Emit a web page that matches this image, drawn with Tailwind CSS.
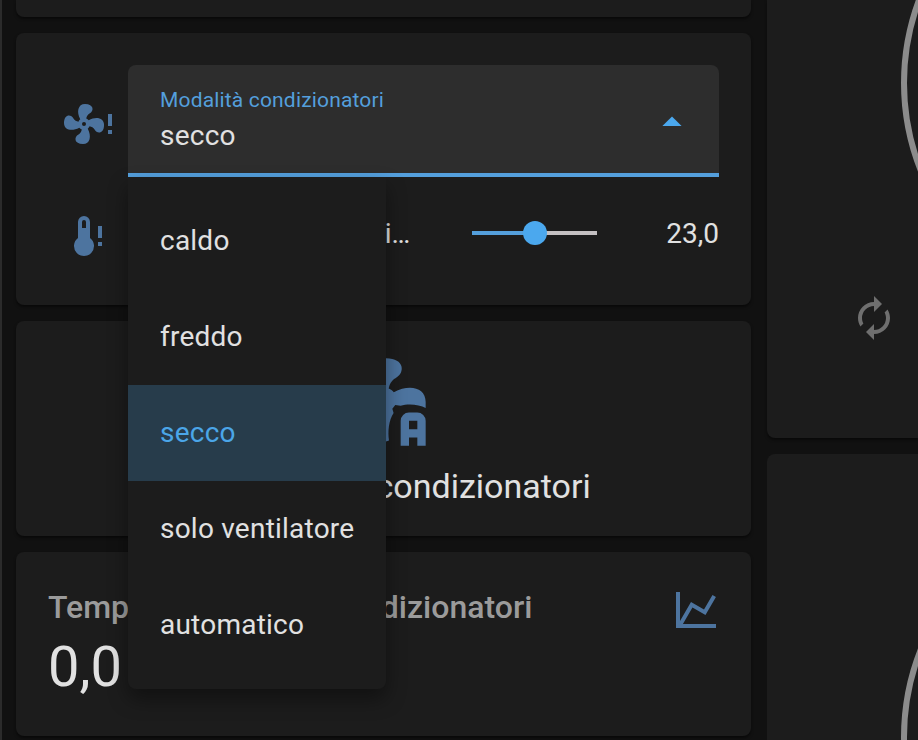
<!DOCTYPE html>
<html lang="it">
<head>
<meta charset="utf-8">
<meta name="viewport" content="width=device-width, initial-scale=1">
<title>Condizionatori</title>
<script src="https://cdn.jsdelivr.net/npm/@tailwindcss/browser@4"></script>
</head>
<body class="bg-[#111111] text-[#e1e1e1] font-[Roboto,sans-serif] text-[28px] leading-8">
<main class="grid h-screen grid-cols-[minmax(0,1fr)_151px] gap-4 overflow-hidden border-l-2 border-[#2b2b2b] pl-3.5">
  <div class="flex flex-col gap-4">
    <section class="h-[17px] shrink-0 rounded-b-lg bg-[#1c1c1c] shadow-[0_2px_3px_rgba(0,0,0,0.5)]"></section>

    <section class="flex flex-col gap-4 rounded-lg bg-[#1c1c1c] p-8 shadow-[0_2px_3px_rgba(0,0,0,0.5)]">
      <div class="flex items-center">
        <div class="w-20 shrink-0 px-4 pt-1.5">
          <svg class="size-12 fill-[#4d749f]" viewBox="0 0 24 24" aria-hidden="true">
            <path transform="translate(-2 0)" d="M12,11A1,1 0 0,0 11,12A1,1 0 0,0 12,13A1,1 0 0,0 13,12A1,1 0 0,0 12,11M12.5,2C17,2 17.11,5.57 14.75,6.75C13.76,7.24 13.32,8.29 13.13,9.22C13.61,9.42 14.03,9.73 14.35,10.13C18.05,8.13 22.03,8.92 22.03,12.5C22.03,17 18.46,17.1 17.28,14.73C16.78,13.74 15.72,13.3 14.79,13.11C14.59,13.59 14.28,14 13.88,14.34C15.87,18.03 15.08,22 11.5,22C7,22 6.91,18.42 9.27,17.24C10.25,16.75 10.69,15.71 10.89,14.79C10.4,14.59 9.97,14.27 9.65,13.87C5.96,15.85 2,15.07 2,11.5C2,7 5.56,6.89 6.74,9.26C7.24,10.25 8.29,10.68 9.22,10.87C9.41,10.39 9.73,9.97 10.14,9.65C8.15,5.96 8.94,2 12.5,2Z"/>
            <path d="M22 7H24V13H22ZM22 15H24V17H22Z"/>
          </svg>
        </div>
        <div class="relative min-w-0 flex-1">
          <div class="relative flex h-28 flex-col rounded-t-lg border-b-4 border-[#549fdc] bg-[#2d2d2d] pt-[23px]">
            <label for="mode" class="px-8 text-[21px] leading-6 tracking-[0.008em] text-[#549fdc]">Modalità condizionatori</label>
            <select id="mode" class="w-full appearance-none bg-transparent px-8 pt-2 leading-8 tracking-[0.008em] outline-none">
              <option>caldo</option>
              <option>freddo</option>
              <option selected>secco</option>
              <option>solo ventilatore</option>
              <option>automatico</option>
            </select>
            <svg class="pointer-events-none absolute top-[33px] right-[23px] size-12 fill-[#4ba8ee]" viewBox="0 0 24 24" aria-hidden="true"><path d="M7.2 14L12 9.2L16.8 14Z"/></svg>
          </div>
          <div role="listbox" aria-label="Modalità condizionatori" class="absolute top-full left-0 z-10 flex w-max flex-col rounded-b-lg bg-[#1c1c1c] py-4 tracking-[0.008em] shadow-[0_10px_20px_rgba(0,0,0,0.4)]">
            <button role="option" class="h-24 px-8 text-left">caldo</button>
            <button role="option" class="h-24 px-8 text-left">freddo</button>
            <button role="option" aria-selected="true" class="h-24 bg-[#273c4b] px-8 text-left text-[#4ba6e8]">secco</button>
            <button role="option" class="h-24 px-8 text-left">solo ventilatore</button>
            <button role="option" class="h-24 px-8 text-left">automatico</button>
          </div>
        </div>
      </div>

      <div class="flex h-20 items-center">
        <div class="w-20 shrink-0 px-4 pt-1.5">
          <svg class="size-12 fill-[#4d749f]" viewBox="0 0 24 24" aria-hidden="true">
            <path d="M13 13V5A3 3 0 0 0 7 5V13A5 5 0 1 0 13 13M10 4A1 1 0 0 1 11 5V8H9V5A1 1 0 0 1 10 4ZM17 7H19V13H17ZM17 15H19V17H17Z"/>
          </svg>
        </div>
        <label for="target" class="min-w-0 flex-1 truncate pt-0.5 pl-[9px]">Temperatura condizionatori</label>
        <input id="target" type="range" min="16" max="30" value="23" step="0.5" class="ml-14 h-6 w-[125px] shrink-0 appearance-none bg-transparent [&::-webkit-slider-runnable-track]:h-1 [&::-webkit-slider-runnable-track]:bg-linear-to-r [&::-webkit-slider-runnable-track]:from-[#549fdc] [&::-webkit-slider-runnable-track]:from-50% [&::-webkit-slider-runnable-track]:to-[#c4c0c2] [&::-webkit-slider-runnable-track]:to-50% [&::-webkit-slider-thumb]:-mt-2.5 [&::-webkit-slider-thumb]:size-6 [&::-webkit-slider-thumb]:appearance-none [&::-webkit-slider-thumb]:rounded-full [&::-webkit-slider-thumb]:bg-[#4ba8ee]">
        <output for="target" class="w-[122px] shrink-0 pt-0.5 text-right">23,0</output>
      </div>
    </section>

    <section class="flex flex-col items-center rounded-lg bg-[#1c1c1c] pt-[29px] pb-7 shadow-[0_2px_3px_rgba(0,0,0,0.5)]">
      <svg class="size-[100px] fill-[#4d749f]" viewBox="0 0 24 24" aria-hidden="true">
        <path d="M12.5,2C17,2 17.11,5.57 14.75,6.75C13.76,7.24 13.32,8.29 13.13,9.22C13.61,9.42 14.03,9.73 14.35,10.13C18.05,8.13 22,8.92 22,12.5V13.9C20.5,13.1 17.8,12.8 16,13.4L14.7,13.2L14,14.1L14.3,15.1C13.1,17 12.9,19.5 13.2,21.7C12.8,21.9 12.2,22 11.5,22C7,22 6.91,18.42 9.27,17.24C10.25,16.75 10.69,15.71 10.89,14.79C10.4,14.59 9.97,14.27 9.65,13.87C5.96,15.85 2,15.07 2,11.5C2,7 5.56,6.89 6.74,9.26C7.24,10.25 8.29,10.68 9.22,10.87C9.41,10.39 9.73,9.97 10.14,9.65C8.15,5.96 8.94,2 12.5,2Z"/>
        <path d="M18 15H20A2 2 0 0 1 22 17V23H20V21H18V23H16V17A2 2 0 0 1 18 15M18 17V19H20V17Z"/>
      </svg>
      <h2 class="pt-[15px] text-[34px] leading-[43px]">Automatizza condizionatori</h2>
    </section>

    <section class="flex h-[184px] shrink-0 flex-col rounded-lg bg-[#1c1c1c] pt-[34px] pr-[31px] pl-8 shadow-[0_2px_3px_rgba(0,0,0,0.5)]">
      <div class="flex h-[49px] items-start justify-between">
        <h2 class="text-[32px] leading-[42px] font-medium text-[#9b9b9b]">Temperatura totale condizionatori</h2>
        <svg class="size-12 shrink-0 fill-[#4d749f]" viewBox="0 0 24 24" aria-hidden="true"><path d="M16,11.78L20.24,4.45L21.97,5.45L16.74,14.5L10.23,10.75L5.46,19H22V21H2V3H4V17.54L9.5,8L16,11.78Z"/></svg>
      </div>
      <p class="text-[56px] leading-16">0,0</p>
    </section>
  </div>

  <div class="flex min-h-0 flex-col gap-4">
    <section class="flex shrink-0 flex-col rounded-bl-lg bg-[#1c1c1c] pb-24 shadow-[0_2px_3px_rgba(0,0,0,0.5)]">
      <svg class="h-[294px] w-full fill-none stroke-[#8c8c8c]" stroke-width="6" aria-hidden="true"><circle cx="374" cy="83" r="237"/></svg>
      <button aria-label="Automatico" class="ml-[83px] size-12">
        <svg class="size-12 fill-[#6f6f6f]" viewBox="0 0 24 24" aria-hidden="true"><path d="M12,6V9L16,5L12,1V4A8,8 0 0,0 4,12C4,13.57 4.46,15.03 5.24,16.26L6.7,14.8C6.25,13.97 6,13 6,12A6,6 0 0,1 12,6M18.76,7.74L17.3,9.2C17.74,10.04 18,11 18,12A6,6 0 0,1 12,18V15L8,19L12,23V20A8,8 0 0,0 20,12C20,10.43 19.54,8.97 18.76,7.74Z"/></svg>
      </button>
    </section>
    <section class="min-h-0 flex-1 rounded-tl-lg bg-[#1c1c1c]">
      <svg class="size-full fill-none stroke-[#8c8c8c]" stroke-width="6" aria-hidden="true"><circle cx="374" cy="283" r="237"/></svg>
    </section>
  </div>
</main>
</body>
</html>
